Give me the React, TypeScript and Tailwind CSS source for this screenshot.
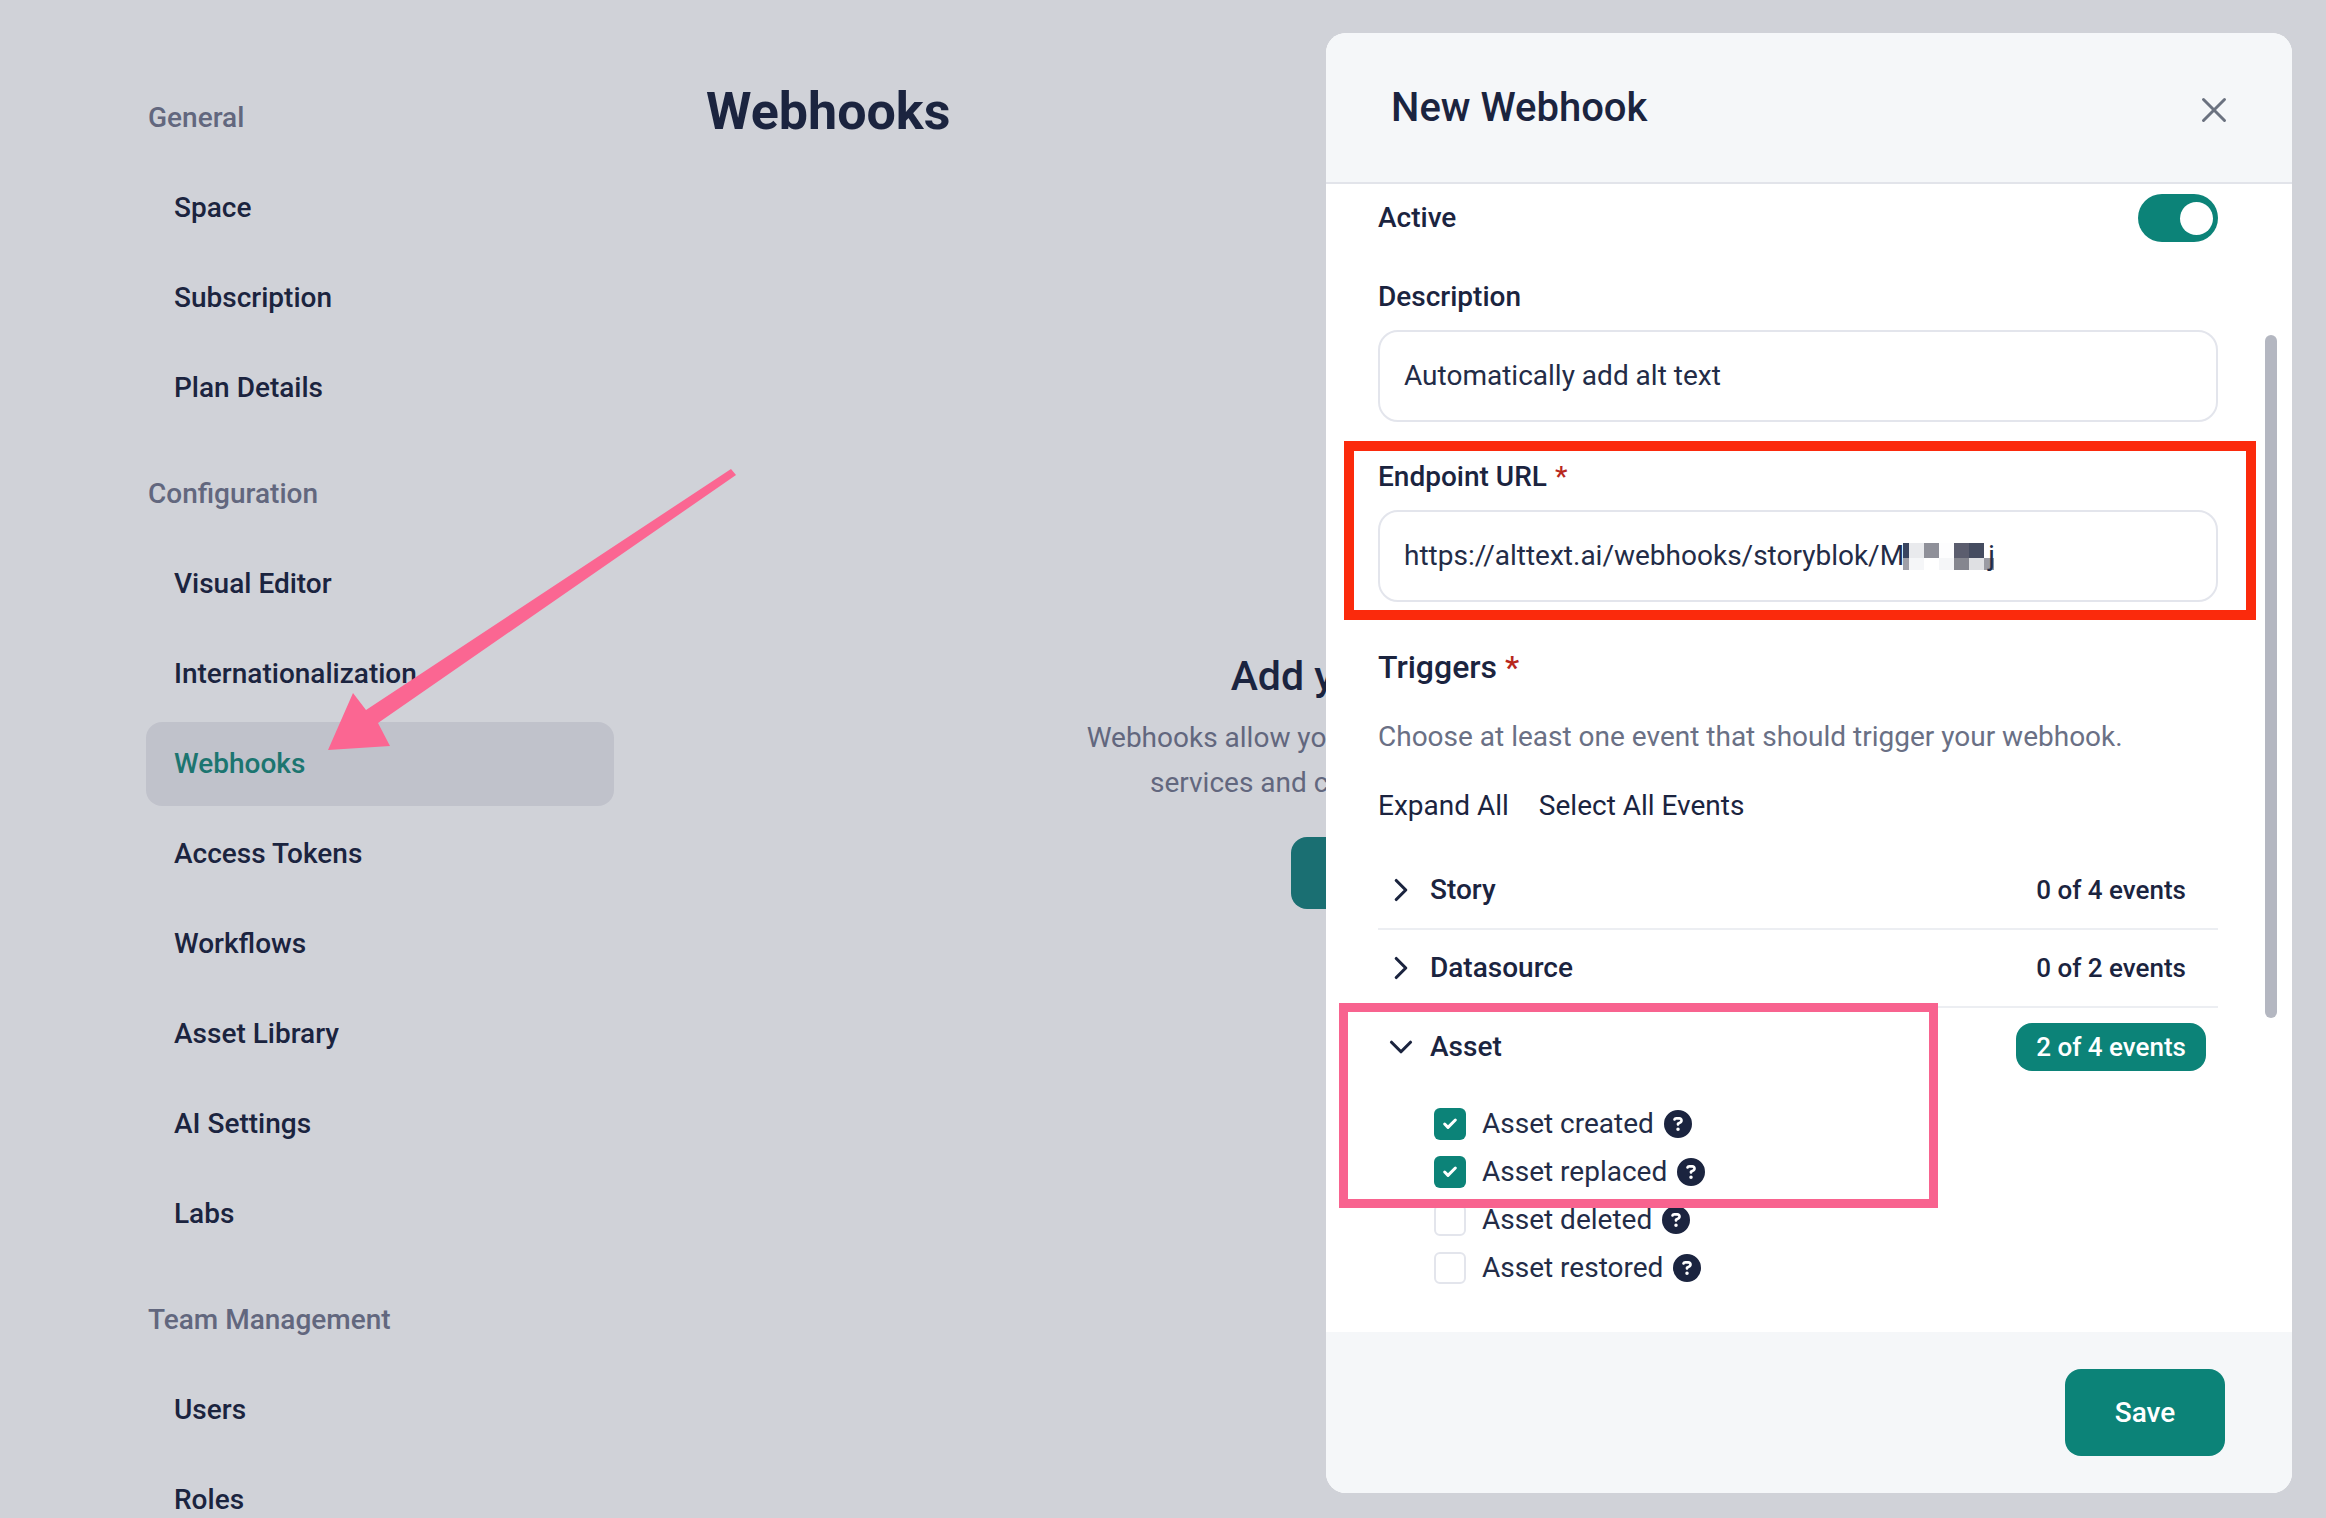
import React from "react";
import { Check, ChevronDown, ChevronRight, X } from "lucide-react";
import { FaCircleQuestion } from "react-icons/fa6";

const groups = [
  { title: "General", items: ["Space", "Subscription", "Plan Details"] },
  {
    title: "Configuration",
    items: [
      "Visual Editor",
      "Internationalization",
      "Webhooks",
      "Access Tokens",
      "Workflows",
      "Asset Library",
      "AI Settings",
      "Labs",
    ],
  },
  { title: "Team Management", items: ["Users", "Roles"] },
];

const assetEvents = [
  { label: "Asset created", checked: true },
  { label: "Asset replaced", checked: true },
  { label: "Asset deleted", checked: false },
  { label: "Asset restored", checked: false },
];

const mosaic = [
  ["#3a4560", "#e9eaed", "#8f9099", "#fdfdfe", "#5b5d6e", "#454c60", "transparent"],
  ["#a0a0a8", "#f5f6f8", "#ffffff", "#f5f6f8", "#85868f", "#dfe0e3", "#9a9ba3"],
];

const Sidebar = () => {
  return (
    <aside className="w-[614px] shrink-0 pl-[146px] pt-[76px] flex flex-col gap-[22px]">
      {groups.map((group) => (
        <div key={group.title} className="flex flex-col gap-[6px]">
          <div className="h-[84px] pl-[2px] flex items-center text-[28px] font-medium text-[#62677e]">
            {group.title}
          </div>
          {group.items.map((item) => (
            <div
              key={item}
              className={
                item === "Webhooks"
                  ? "h-[84px] shrink-0 pl-[28px] flex items-center rounded-[16px] bg-[#c0c2cb] text-[28px] font-medium text-[#1c7570]"
                  : "h-[84px] shrink-0 pl-[28px] flex items-center text-[28px] font-medium text-[#1b243f]"
              }
            >
              {item}
            </div>
          ))}
        </div>
      ))}
    </aside>
  );
};

const Main = () => {
  return (
    <main className="flex-1 pl-[92px] pr-[142px] pt-[76px]">
      <h1 className="h-[72px] flex items-center text-[52px] font-bold text-[#1b243f]">
        Webhooks
      </h1>
      <div className="mt-[501px] flex flex-col items-center">
        <div className="h-[56px] flex items-center text-[41px] font-medium text-[#1b243f]">
          Add your first Webhook
        </div>
        <p className="mt-[10px] text-center text-[28px] leading-[45px] text-[#62677e]">
          Webhooks allow you to send real-time updates to external
          <br />
          services and connect them with your own apps.
        </p>
        <div className="mt-[32px] w-[308px] h-[72px] rounded-[16px] bg-[#1a6f72]" />
      </div>
    </main>
  );
};

const Field = ({ label, required, children }: { label: string; required?: boolean; children: React.ReactNode }) => (
  <div>
    <div className="h-[36px] flex items-center gap-[8px] text-[28px] font-medium text-[#1b243f]">
      {label}
      {required && <span className="text-[#b8281d]">*</span>}
    </div>
    <div className="relative mt-[15px] h-[92px] px-[24px] flex items-center rounded-[20px] border-2 border-[#e3e5ec] bg-white text-[28px] text-[#232c47]">
      {children}
    </div>
  </div>
);

const Row = ({ title, count, open }: { title: string; count: string; open?: boolean }) => (
  <div
    className={
      open
        ? "h-[78px] pl-[4px] pr-[12px] flex items-center"
        : "h-[78px] pl-[4px] pr-[12px] flex items-center border-b-2 border-[#eceef2]"
    }
  >
    {open ? (
      <ChevronDown size={38} strokeWidth={2} className="text-[#1b243f]" />
    ) : (
      <ChevronRight size={38} strokeWidth={2} className="text-[#1b243f]" />
    )}
    <div className="ml-[10px] flex-1 text-[28px] font-medium text-[#1b243f]">{title}</div>
    <div
      className={
        open
          ? "h-[48px] px-[20px] flex items-center rounded-[16px] bg-[#0c8378] text-[26px] font-medium text-white"
          : "h-[48px] px-[20px] flex items-center text-[26px] font-medium text-[#1b243f]"
      }
    >
      {count}
    </div>
  </div>
);

const Drawer = () => {
  return (
    <section className="absolute left-[1326px] top-[33px] w-[966px] h-[1460px] flex flex-col rounded-[20px] overflow-hidden bg-white">
      <header className="h-[151px] shrink-0 pl-[65px] pr-[57px] flex items-center justify-between bg-[#f5f7f9] border-b-2 border-[#e2e4ea]">
        <div className="text-[40px] font-medium text-[#1b243f]">New Webhook</div>
        <X size={42} strokeWidth={1.7} className="text-[#6b7280] mt-[4px]" />
      </header>

      <div className="relative flex-1 pt-[10px] pl-[52px] pr-[74px] overflow-hidden">
        <div className="h-[48px] flex items-center justify-between text-[28px] font-medium text-[#1b243f]">
          Active
          <div className="w-[80px] h-[48px] pr-[5px] flex items-center justify-end rounded-full bg-[#0c8378]">
            <div className="w-[33px] h-[33px] rounded-full bg-white" />
          </div>
        </div>

        <div className="mt-[37px]">
          <Field label="Description">Automatically add alt text</Field>
        </div>

        <div className="mt-[37px]">
          <Field label="Endpoint URL" required>
            https://alttext.ai/webhooks/storyblok/M
            <div className="ml-[-1px] flex flex-col">
              {mosaic.map((cells, i) => (
                <div key={i} className={i === 0 ? "flex h-[15px]" : "flex h-[12px]"}>
                  {cells.map((color, j) => (
                    <div
                      key={j}
                      className={j === 0 ? "w-[6px]" : j === 6 ? "w-[10px]" : "w-[15px]"}
                      style={{ backgroundColor: color }}
                    />
                  ))}
                </div>
              ))}
            </div>
            <span className="ml-[-6px]">j</span>
          </Field>
        </div>

        <div className="mt-[43px] h-[44px] flex items-center gap-[8px] text-[32px] font-medium text-[#1b243f]">
          Triggers
          <span className="text-[#b8281d]">*</span>
        </div>
        <div className="mt-[28px] h-[40px] flex items-center text-[28px] text-[#6a7085]">
          Choose at least one event that should trigger your webhook.
        </div>
        <div className="mt-[29px] h-[40px] flex items-center gap-[30px] text-[28px] text-[#1b243f]">
          <span>Expand All</span>
          <span>Select All Events</span>
        </div>

        <div className="mt-[26px]">
          <Row title="Story" count="0 of 4 events" />
          <Row title="Datasource" count="0 of 2 events" />
          <Row title="Asset" count="2 of 4 events" open />
        </div>

        <div className="mt-[14px] pl-[56px] flex flex-col">
          {assetEvents.map((event) => (
            <div key={event.label} className="h-[48px] flex items-center text-[28px] text-[#232c47]">
              {event.checked ? (
                <div className="w-[32px] h-[32px] flex items-center justify-center rounded-[6px] bg-[#0c8378]">
                  <Check size={16} strokeWidth={4.5} className="text-white" />
                </div>
              ) : (
                <div className="w-[32px] h-[32px] rounded-[6px] border-2 border-[#e3e5ec]" />
              )}
              <span className="ml-[16px]">{event.label}</span>
              <FaCircleQuestion size={28} className="ml-[10px] text-[#1b243f]" />
            </div>
          ))}
        </div>

        {/* scrollbar */}
        <div className="absolute left-[939px] top-[151px] w-[12px] h-[683px] rounded-full bg-[#b4b7c1]" />
      </div>

      <footer className="h-[161px] shrink-0 pt-[37px] pr-[67px] flex justify-end bg-[#f5f7f9]">
        <div className="w-[160px] h-[87px] flex items-center justify-center rounded-[16px] bg-[#0c8378] text-[28px] font-medium text-white">
          Save
        </div>
      </footer>
    </section>
  );
};

const Annotations = () => (
  <>
    <svg className="absolute left-0 top-0 pointer-events-none" width="2326" height="1518">
      <polygon
        points="731,469 736,475 378,723 390,746 328,750 353,693 366,710"
        fill="#fb6692"
      />
    </svg>
    <div className="absolute left-[1344px] top-[441px] w-[912px] h-[179px] border-[10px] border-[#fb2a0c]" />
    <div className="absolute left-[1339px] top-[1003px] w-[599px] h-[205px] border-[9px] border-[#f8638f]" />
  </>
);

const App = () => {
  return (
    <div className="relative w-[2326px] h-[1518px] flex overflow-hidden bg-[#d0d2d8] font-['Roboto',sans-serif]">
      <Sidebar />
      <Main />
      <Drawer />
      <Annotations />
    </div>
  );
};

export default App;
